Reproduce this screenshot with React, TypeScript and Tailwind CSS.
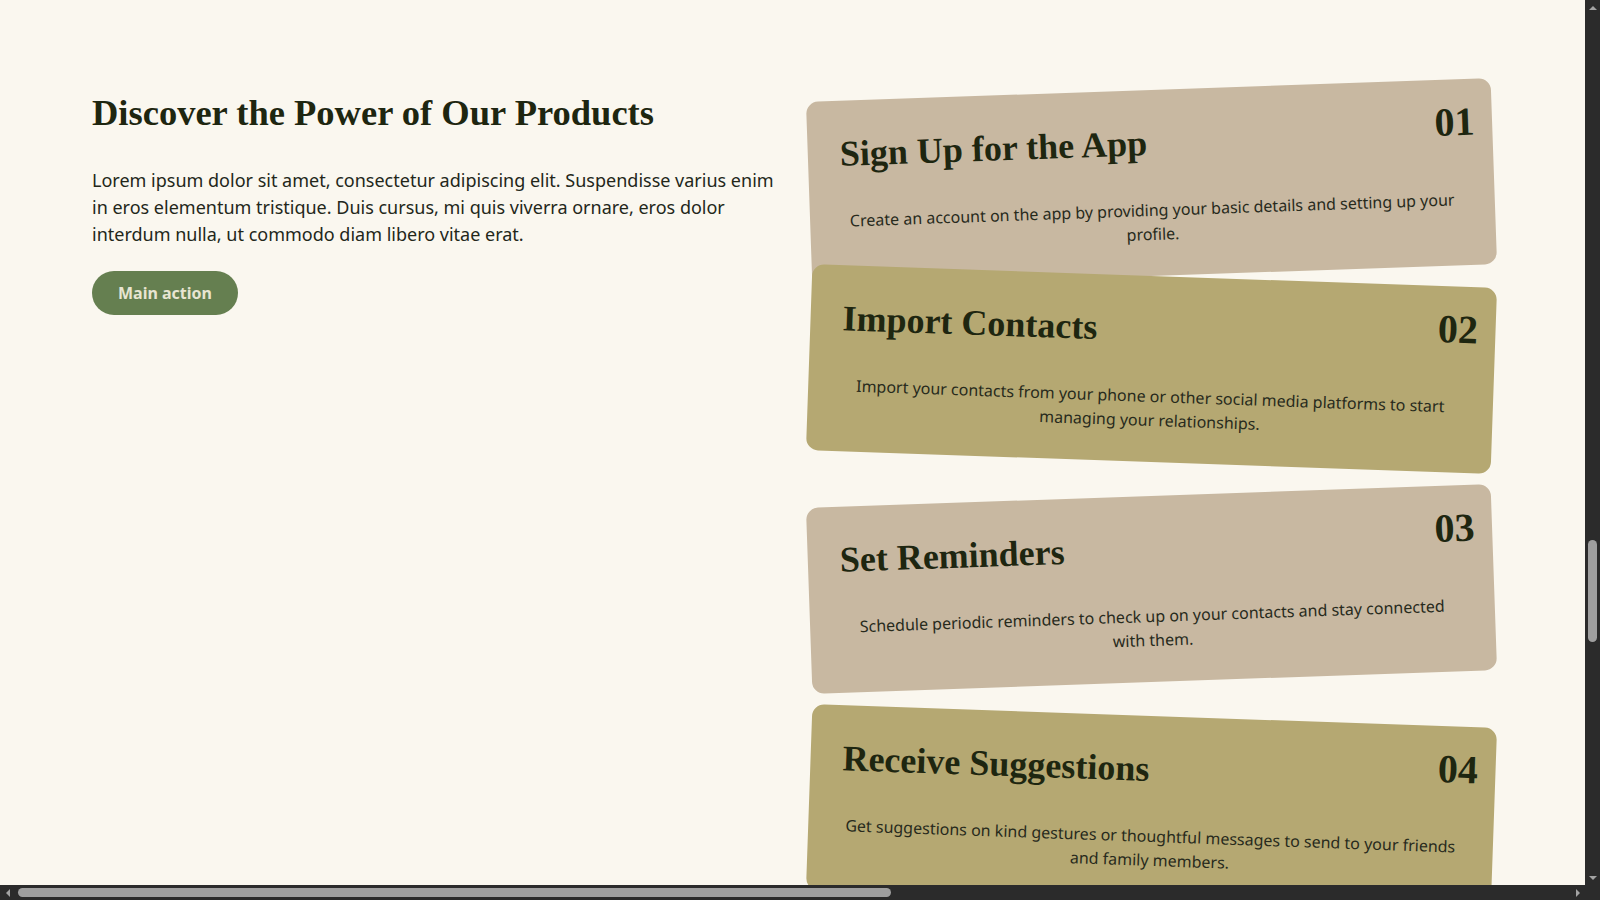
const steps = [
  {
    no: "01",
    title: "Sign Up for the App",
    text: "Create an account on the app by providing your basic details and setting up your profile.",
    className: "bg-[#c8b8a1] -rotate-2",
  },
  {
    no: "02",
    title: "Import Contacts",
    text: "Import your contacts from your phone or other social media platforms to start managing your relationships.",
    className: "bg-[#b5a872] rotate-2",
  },
  {
    no: "03",
    title: "Set Reminders",
    text: "Schedule periodic reminders to check up on your contacts and stay connected with them.",
    className: "bg-[#c8b8a1] -rotate-2 mt-[34px]",
  },
  {
    no: "04",
    title: "Receive Suggestions",
    text: "Get suggestions on kind gestures or thoughtful messages to send to your friends and family members.",
    className: "bg-[#b5a872] rotate-2 mt-[34px]",
  },
];

const StepCard = ({ step }: { step: (typeof steps)[number] }) => {
  return (
    <div className={`h-[186px] rounded-xl px-8 pt-5 ${step.className}`}>
      <div className="flex items-start justify-between">
        <h3 className="mt-3 font-['Liberation_Serif',serif] text-[36px] font-bold leading-[1.2] text-[#1e2610]">
          {step.title}
        </h3>
        <span className="-mr-[15px] mt-[1px] font-['Liberation_Serif',serif] text-[40px] font-bold leading-[1.1] text-[#1e2610]">
          {step.no}
        </span>
      </div>
      <p className="mt-[33px] px-1 text-center font-['Noto_Sans',sans-serif] text-base leading-6 text-[#272a1c]">
        {step.text}
      </p>
    </div>
  );
};

// window scrollbars, as they appear in the screenshot
const VerticalBar = () => (
  <div className="flex flex-col bg-[#2b2b2b]">
    <div className="flex h-[15px] items-center justify-center">
      <div className="h-0 w-0 border-x-[4px] border-b-[4px] border-x-transparent border-b-[#a3a3a3]" />
    </div>
    <div className="flex-1">
      <div className="ml-[3px] mt-[525px] h-[102px] w-[9px] rounded-full bg-[#9f9f9f]" />
    </div>
    <div className="flex h-[15px] items-center justify-center">
      <div className="h-0 w-0 border-x-[4px] border-t-[4px] border-x-transparent border-t-[#a3a3a3]" />
    </div>
  </div>
);

const HorizontalBar = () => (
  <div className="flex bg-[#2b2b2b]">
    <div className="flex w-[15px] items-center justify-center">
      <div className="h-0 w-0 border-y-[4px] border-r-[4px] border-y-transparent border-r-[#a3a3a3]" />
    </div>
    <div className="flex flex-1 items-center">
      <div className="ml-[3px] h-[9px] w-[873px] rounded-full bg-[#9f9f9f]" />
    </div>
    <div className="flex w-[15px] items-center justify-center">
      <div className="h-0 w-0 border-y-[4px] border-l-[4px] border-y-transparent border-l-[#a3a3a3]" />
    </div>
  </div>
);

export default function App() {
  return (
    <div className="grid h-screen w-full grid-cols-[1fr_15px] grid-rows-[1fr_15px] overflow-hidden bg-[#faf7ef]">
      <div className="overflow-hidden">
        {/* Products section */}
        <section className="px-[92px] pt-[90px] pb-[90px]">
          <div className="grid grid-cols-2 items-start gap-8">
            {/* Intro */}
            <div className="mt-[1px] flex flex-col items-start">
              <h2 className="font-['Liberation_Serif',serif] text-[36.5px] font-bold leading-[1.2] text-[#1e2610]">
                Discover the Power of Our Products
              </h2>
              <p className="mt-8 font-['Noto_Sans',sans-serif] text-lg leading-[27px] text-[#23271a]">
                Lorem ipsum dolor sit amet, consectetur adipiscing elit.
                Suspendisse varius enim in eros elementum tristique. Duis
                cursus, mi quis viverra ornare, eros dolor interdum nulla, ut
                commodo diam libero vitae erat.
              </p>
              <button className="mt-[23px] h-[44px] rounded-full bg-[#657f50] px-[26px] font-['Noto_Sans',sans-serif] text-base font-bold text-[#e8e5d2]">
                Main action
              </button>
            </div>

            {/* Steps */}
            <div className="flex flex-col">
              {steps.map((step) => (
                <StepCard key={step.no} step={step} />
              ))}
            </div>
          </div>
        </section>
      </div>
      <VerticalBar />
      <HorizontalBar />
      <div className="bg-[#2b2b2b]" />
    </div>
  );
}
